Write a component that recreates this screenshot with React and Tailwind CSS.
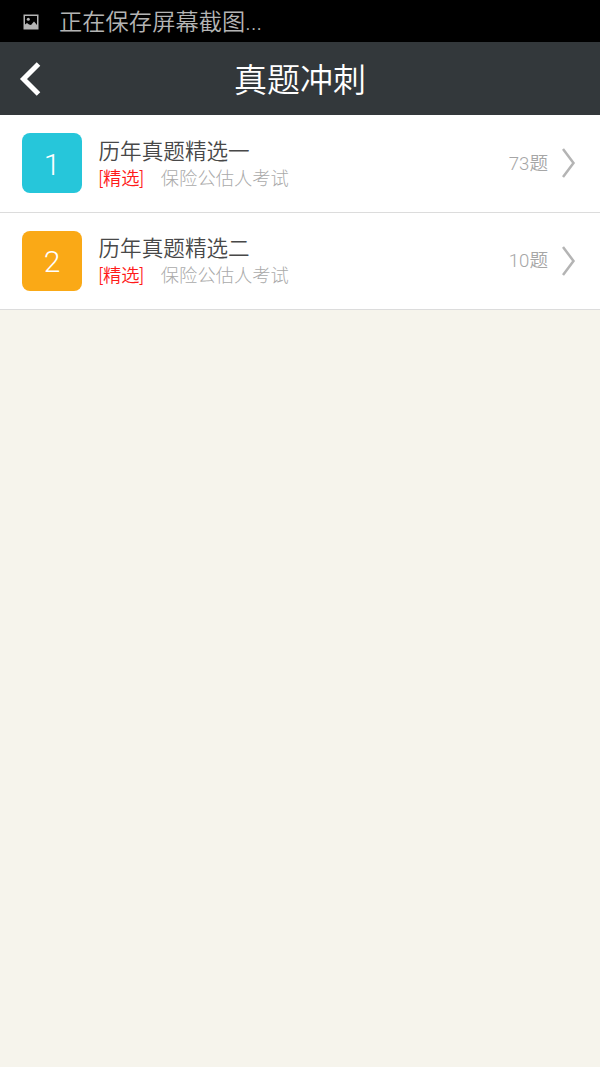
const papers = [
  { id: 1, title: "历年真题精选一", tag: "[精选]", exam: "保险公估人考试", count: "73题", badge: "bg-[#26c6da]" },
  { id: 2, title: "历年真题精选二", tag: "[精选]", exam: "保险公估人考试", count: "10题", badge: "bg-[#faa916]" },
]

export default function App() {
  return (
    <div className="h-[1067px] w-[600px] overflow-hidden bg-[#f6f4ec] font-['Roboto','Noto_Sans_CJK_SC',sans-serif] font-[350]">
      <StatusBar />
      <Header title="真题冲刺" />
      <ul>
        {papers.map((p) => (
          <PaperRow key={p.id} paper={p} />
        ))}
      </ul>
    </div>
  )
}

function StatusBar() {
  return (
    <div className="flex h-[42px] items-center bg-black pl-[23px] text-[#b4b4b4]">
      <svg width="16" height="16" viewBox="0 0 16 16" className="mt-0.5 shrink-0">
        <path fill="currentColor" fillRule="evenodd" d="M.5 .5h15v15H.5zM2 2v12h12V2z" />
        <path fill="currentColor" d="M2 14v-3.500l2-1.500 2 1.500 2 .5 3-3.500L14 11v3z" />
        <circle cx="5.300" cy="5.300" r="1.500" fill="currentColor" />
      </svg>
      <span className="ml-5 pt-[2px] text-[23.200px] leading-[40px] tracking-[0.1px]">正在保存屏幕截图...</span>
    </div>
  )
}

function Header({ title }) {
  return (
    <header className="grid h-[73px] grid-cols-[60px_1fr_60px] items-center bg-[#33383b] text-white">
      <svg width="22" height="34" viewBox="0 0 22 34" className="ml-[19px]" fill="none" stroke="currentColor" strokeWidth="5">
        <path d="M19.500 2L4.500 17l15 15" />
      </svg>
      <h1 className="pt-1 text-center text-[33px] leading-[69px]">{title}</h1>
    </header>
  )
}

function PaperRow({ paper }) {
  return (
    <li className="flex h-[97.500px] items-center border-b border-[#dcdcdc] bg-white pr-6 pl-[22px]">
      <div className={`flex size-[60px] shrink-0 items-center justify-center rounded-lg pt-0.5 text-[30px] font-light text-white ${paper.badge}`}>
        {paper.id}
      </div>
      <div className="ml-[16.500px] flex-1 pt-[3px]">
        <p className="text-[21.600px] leading-[28px] text-[#484848]">{paper.title}</p>
        <p className="flex gap-[17px] text-[18.300px] leading-[26px]">
          <span className="text-[#ff1a1a]">{paper.tag}</span>
          <span className="font-light text-[#aaa]">{paper.exam}</span>
        </p>
      </div>
      <span className="pt-[3px] text-[18.600px] text-[#a6a6a6]">{paper.count}</span>
      <svg width="14" height="30" viewBox="0 0 14 30" className="ml-3.5" fill="none" stroke="#b4b4b4" strokeWidth="2.500">
        <path d="M1 1l10.500 14L1 29" />
      </svg>
    </li>
  )
}
